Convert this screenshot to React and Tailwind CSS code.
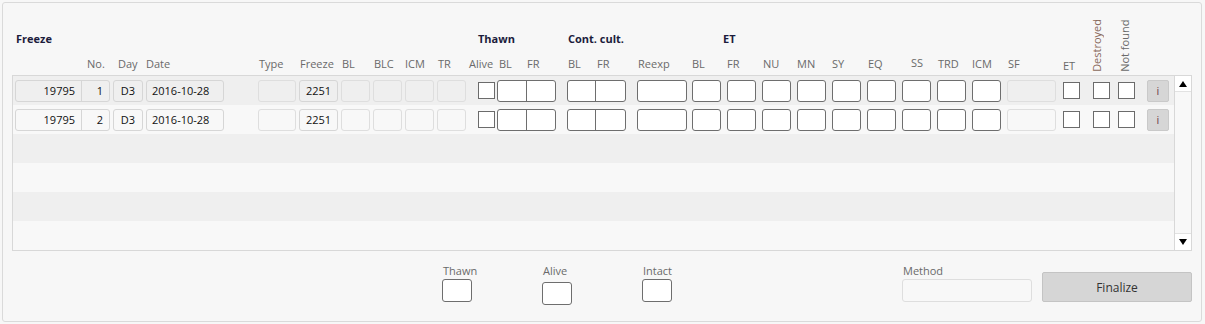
import React from 'react';

const rows = [
  { id: '19795', no: '1', day: 'D3', date: '2016-10-28', freeze: '2251' },
  { id: '19795', no: '2', day: 'D3', date: '2016-10-28', freeze: '2251' },
];

const stripes = ['bg-[#efefef]', 'bg-[#f8f8f8]', 'bg-[#efefef]', 'bg-[#f8f8f8]', 'bg-[#efefef]', 'bg-[#f8f8f8]'];

const roCell = "h-[22px] border border-[#d6d6d6] rounded-[3px] leading-[20px] text-[#111]";
const offCell = "h-[22px] border border-[#dedede] rounded-[3px]";
const edit = "h-[22px] bg-white border border-[#6e6e6e] rounded-[3px]";
const box = "w-[17px] h-[17px] bg-white border border-[#6b6b6b] shrink-0";

function DataRow({ r, bg }) {
  return (
    <div className={`h-[29px] flex items-center pl-[2px] ${bg}`}>
      <div className={`${roCell} w-[95px] flex`}>
        <div className="w-[66px] border-r border-[#d6d6d6] text-right pr-[6px]">{r.id}</div>
        <div className="flex-1 text-right pr-[6px]">{r.no}</div>
      </div>
      <div className={`${roCell} ml-[3px] w-[30px] text-center`}>{r.day}</div>
      <div className={`${roCell} ml-[3px] w-[78px] pl-[5px]`}>{r.date}</div>
      <div className={`${offCell} ml-[34px] w-[38px]`} />
      <div className={`${roCell} ml-[3px] w-[39px] text-center`}>{r.freeze}</div>
      <div className={`${offCell} ml-[3px] w-[29px]`} />
      <div className={`${offCell} ml-[3px] w-[29px]`} />
      <div className={`${offCell} ml-[3px] w-[29px]`} />
      <div className={`${offCell} ml-[3px] w-[29px]`} />
      <div className={`${box} ml-[12px]`} />
      <div className={`${edit} ml-[2px] w-[59px] flex`}>
        <div className="w-[29px] border-r border-[#6e6e6e]" />
      </div>
      <div className={`${edit} ml-[11px] w-[59px] flex`}>
        <div className="w-[28px] border-r border-[#6e6e6e]" />
      </div>
      <div className={`${edit} ml-[11px] w-[50px]`} />
      <div className={`${edit} ml-[5px] w-[29px]`} />
      <div className={`${edit} ml-[6px] w-[29px]`} />
      <div className={`${edit} ml-[6px] w-[29px]`} />
      <div className={`${edit} ml-[6px] w-[29px]`} />
      <div className={`${edit} ml-[6px] w-[29px]`} />
      <div className={`${edit} ml-[6px] w-[29px]`} />
      <div className={`${edit} ml-[6px] w-[29px]`} />
      <div className={`${edit} ml-[6px] w-[29px]`} />
      <div className={`${edit} ml-[6px] w-[29px]`} />
      <div className={`${offCell} ml-[6px] w-[49px]`} />
      <div className={`${box} ml-[7px]`} />
      <div className={`${box} ml-[13px]`} />
      <div className={`${box} ml-[8px]`} />
      <button className="ml-[12px] w-[22px] h-[22px] bg-[#d6d6d6] border border-[#c9c9c9] rounded-[2px] text-[#6e3e46] leading-[20px] text-center">i</button>
    </div>
  );
}

function Arrow({ up }) {
  return (
    <svg width="8" height="6" viewBox="0 0 8 6">
      <polygon points={up ? "0,6 8,6 4,0" : "0,0 8,0 4,6"} fill="#000" />
    </svg>
  );
}

export default function App() {
  return (
    <div className="w-[1205px] h-[324px] bg-[#f7f7f7] p-[2px] font-['Open_Sans',sans-serif] text-[11px] leading-[15px]">
      <div className="w-[1200px] h-[320px] bg-[#f7f7f7] border border-[#dadada] rounded-[3px] flex flex-col">
        {/* header */}
        <div className="h-[72px] flex items-end">
          <div className="w-[1086px] flex flex-col pb-[2px]">
            <div className="flex font-bold text-[#1c1c3c]">
              <div className="w-[475px] pl-[13px]">Freeze</div>
              <div className="w-[90px]">Thawn</div>
              <div className="w-[155px]">Cont. cult.</div>
              <div>ET</div>
            </div>
            <div className="mt-[10px] flex pl-[84px] text-[#6a6a6a] whitespace-nowrap">
              <div className="w-[31px]">No.</div>
              <div className="w-[28px]">Day</div>
              <div className="w-[113px]">Date</div>
              <div className="w-[41px]">Type</div>
              <div className="w-[42px]">Freeze</div>
              <div className="w-[32px]">BL</div>
              <div className="w-[31px]">BLC</div>
              <div className="w-[33px]">ICM</div>
              <div className="w-[31px]">TR</div>
              <div className="w-[30px]">Alive</div>
              <div className="w-[28px]">BL</div>
              <div className="w-[41px]">FR</div>
              <div className="w-[29px]">BL</div>
              <div className="w-[41px]">FR</div>
              <div className="w-[54px]">Reexp</div>
              <div className="w-[35px]">BL</div>
              <div className="w-[36px]">FR</div>
              <div className="w-[34px]">NU</div>
              <div className="w-[35px]">MN</div>
              <div className="w-[36px]">SY</div>
              <div className="w-[43px]">EQ</div>
              <div className="w-[27px] -mt-[1px]">SS</div>
              <div className="w-[34px]">TRD</div>
              <div className="w-[36px]">ICM</div>
              <div className="w-[55px]">SF</div>
              <div className="mt-[2px]">ET</div>
            </div>
          </div>
          <div className="flex pb-[3px] text-[#6a6a6a] whitespace-nowrap">
            <div className="w-[15px] [writing-mode:vertical-rl] rotate-180 text-[#8a6a5c]">Destroyed</div>
            <div className="ml-[13px] w-[15px] [writing-mode:vertical-rl] rotate-180">Not found</div>
          </div>
        </div>

        {/* table */}
        <div className="ml-[9px] w-[1180px] h-[176px] border border-[#d8d8d8] flex">
          <div className="w-[1161px] flex flex-col">
            {stripes.map((bg, i) =>
              rows[i] ? <DataRow key={i} r={rows[i]} bg={bg} /> : <div key={i} className={`h-[29px] ${bg}`} />
            )}
          </div>
          <div className="w-[17px] border-l border-[#d8d8d8] bg-[#f8f8f8] flex flex-col justify-between">
            <div className="h-[16px] bg-white border-b border-[#e2e2e2] flex items-center justify-center"><Arrow up /></div>
            <div className="h-[17px] bg-white border-t border-[#e2e2e2] flex items-center justify-center"><Arrow /></div>
          </div>
        </div>

        {/* bottom */}
        <div className="flex items-start mt-[12px] ml-[439px] text-[#6a6a6a]">
          <div className="w-[100px]">
            <div className="pl-[1px]">Thawn</div>
            <div className="mt-[1px] w-[30px] h-[23px] bg-white border border-[#6e6e6e] rounded-[3px]" />
          </div>
          <div className="w-[100px]">
            <div className="pl-[1px]">Alive</div>
            <div className="mt-[4px] w-[30px] h-[23px] bg-white border border-[#6e6e6e] rounded-[3px]" />
          </div>
          <div className="w-[260px]">
            <div className="pl-[1px]">Intact</div>
            <div className="mt-[1px] w-[30px] h-[23px] bg-white border border-[#6e6e6e] rounded-[3px]" />
          </div>
          <div className="w-[140px]">
            <div className="pl-[1px]">Method</div>
            <div className="mt-[1px] w-[130px] h-[23px] bg-[#f8f8f8] border border-[#dedede] rounded-[3px]" />
          </div>
          <button className="mt-[9px] w-[150px] h-[30px] bg-[#d6d6d6] border border-[#c4c4c4] rounded-[2px] text-[#333] text-[12px]">Finalize</button>
        </div>
      </div>
    </div>
  );
}
